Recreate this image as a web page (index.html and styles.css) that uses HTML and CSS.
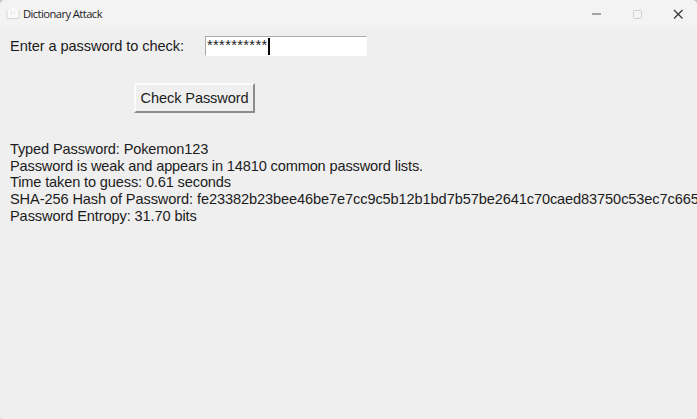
FILE: index.html
```html
<!DOCTYPE html>
<html lang="en">
<head>
<meta charset="utf-8">
<title>Dictionary Attack</title>
<link rel="stylesheet" href="styles.css">
</head>
<body>
<div class="window">
  <header class="titlebar">
    <svg class="app-icon" width="14" height="13" viewBox="0 0 14 13"><path d="M1 2.5h4v-2h4v2h4v9H1z" fill="#fafafa"/><path d="M1 3.5v8h12v-8" fill="none" stroke="#d9d5d1"/><path d="M5.5 4v4M8.5 4v3" stroke="#e7e5e2"/></svg>
    <h1 class="title">Dictionary Attack</h1>
    <div class="controls">
      <svg width="41" height="26" viewBox="0 0 41 26"><path d="M11 13h9" stroke="#555" stroke-width="1.1"/></svg>
      <svg width="41" height="26" viewBox="0 0 41 26"><rect x="11.5" y="9.5" width="8" height="8" rx="1" fill="none" stroke="#cfcfcf"/></svg>
      <svg width="41" height="26" viewBox="0 0 41 26"><path d="M11 9l8.5 8.5M19.5 9L11 17.5" stroke="#333" stroke-width="1.2"/></svg>
    </div>
  </header>
  <main class="content">
    <div class="entry-row">
      <span class="label">Enter a password to check:</span>
      <div class="entry"><span class="mask">**********</span><span class="caret"></span></div>
    </div>
    <button class="check">Check Password</button>
    <div class="results">
      <div class="r1">Typed Password: Pokemon123</div>
      <div class="r2">Password is weak and appears in 14810 common password lists.</div>
      <div class="r3">Time taken to guess: 0.61 seconds</div>
      <div class="hash">SHA-256 Hash of Password: fe23382b23bee46be7e7cc9c5b12b1bd7b57be2641c70caed83750c53ec7c665</div>
      <div class="entropy">Password Entropy: 31.70 bits</div>
    </div>
  </main>
</div>
</body>
</html>
```
FILE: styles.css
```css
* { box-sizing: border-box; }
body { margin: 0; background: #c4c4c4; overflow: hidden; }
.window {
  width: 697px;
  height: 419px;
  overflow: hidden;
  border-radius: 5px 5px 2px 2px;
  background: #efefef;
  color: #1c1c1c;
  font: 14.6px/16.67px "Liberation Sans", Arial, sans-serif;
}
.titlebar {
  display: flex;
  align-items: center;
  height: 27px;
  padding-left: 6px;
  background: #f3f3f3;
}
.title {
  margin: 0 0 0 3px;
  font: 11.2px/26px "Open Sans", "Noto Sans", sans-serif;
  letter-spacing: -0.56px;
  white-space: nowrap;
}
.controls { display: flex; margin: 0 -7px 0 auto; height: 26px; }
.content { padding: 9px 0 0 10px; white-space: nowrap; }
.entry-row { display: flex; height: 20px; }
.label { width: 195px; line-height: 20px; letter-spacing: -0.08px; }
.entry {
  display: flex;
  width: 162px;
  height: 20px;
  padding: 1px;
  border: 1px solid;
  border-color: #aaa #fff #fff #aaa;
  background: #fff;
}
.mask { line-height: 15px; letter-spacing: 0.37px; }
.caret { width: 2px; height: 17px; background: #000; }
.check {
  display: block;
  width: 121px;
  height: 30px;
  margin: 27px 0 0 124px;
  padding: 0;
  border: 2px solid;
  border-color: #fafafa #8c8c8c #8c8c8c #fafafa;
  background: #efefef;
  color: inherit;
  font: inherit;
  letter-spacing: -0.11px;
}
.results { margin-top: 28px; letter-spacing: -0.147px; }
.hash, .entropy { letter-spacing: -0.11px; }
```
